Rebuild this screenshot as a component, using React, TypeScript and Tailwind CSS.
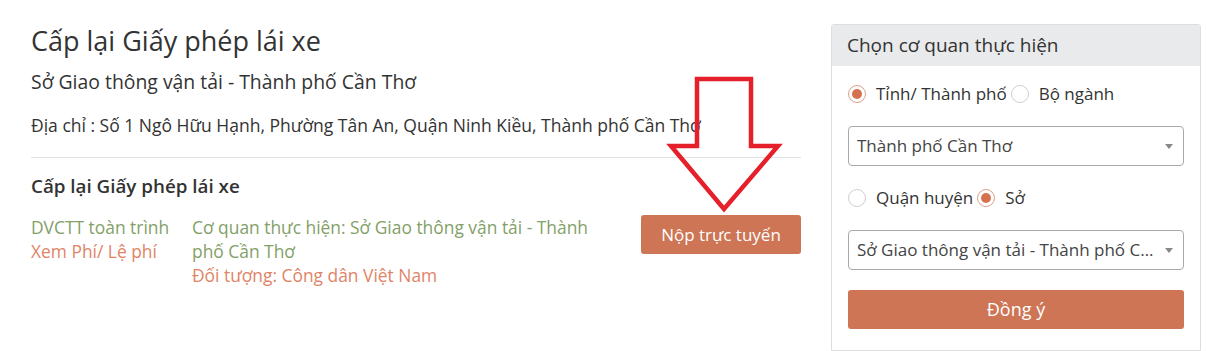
function Radio({ checked, label }: { checked: boolean; label: string }) {
  return (
    <label className="flex items-center">
      <span
        className={
          checked
            ? "flex h-[18px] w-[18px] items-center justify-center rounded-full border border-[#d9a08a] bg-white"
            : "flex h-[18px] w-[18px] items-center justify-center rounded-full border border-[#cfcfcf] bg-white"
        }
      >
        {checked && <span className="h-[10px] w-[10px] rounded-full bg-[#d6714f]" />}
      </span>
      <span className="ml-[10px] mr-[4px]">{label}</span>
    </label>
  );
}

function FakeSelect({ value }: { value: string }) {
  return (
    <div className="flex h-[40px] items-center rounded-[4px] border border-[#aaaaaa] bg-white pl-[8px] pr-[10px]">
      <span className="flex-1 truncate text-[17px] text-[#444]">{value}</span>
      <span className="ml-2 h-0 w-0 border-x-[4px] border-t-[5px] border-x-transparent border-t-[#888]" />
    </div>
  );
}

export default function App() {
  return (
    <div className="flex h-[351px] w-[1206px] overflow-hidden bg-white font-['Open_Sans',sans-serif] text-[#333]">
      <div className="relative ml-[31px] w-[770px]">
        <h1 className="mt-[25px] text-[27px] leading-[32px] text-[#333]">Cấp lại Giấy phép lái xe</h1>
        <p className="mt-[12px] text-[19.4px] leading-[26px]">Sở Giao thông vận tải - Thành phố Cần Thơ</p>
        <p className="mt-[18px] text-[17.5px] leading-[24px]">
          Địa chỉ : Số 1 Ngô Hữu Hạnh, Phường Tân An, Quận Ninh Kiều, Thành phố Cần Thơ
        </p>
        <div className="mt-[20px] border-t border-[#e2e2e2]" />
        <h2 className="mt-[16px] text-[18.8px] font-semibold leading-[24px]">Cấp lại Giấy phép lái xe</h2>
        <div className="mt-[17px] flex text-[17.4px] leading-[24px]">
          <div className="w-[161px]">
            <div className="text-[#84a068]">DVCTT toàn trình</div>
            <div className="text-[#df8467]">Xem Phí/ Lệ phí</div>
          </div>
          <div className="w-[400px]">
            <div className="text-[#84a068]">Cơ quan thực hiện: Sở Giao thông vận tải - Thành phố Cần Thơ</div>
            <div className="text-[#df8467]">Đối tượng: Công dân Việt Nam</div>
          </div>
          <button className="ml-auto h-[39px] w-[160px] rounded-[3px] bg-[#cd7555] text-[17px] text-white">
            Nộp trực tuyến
          </button>
        </div>
        <svg className="absolute left-[608px] top-[76px]" width="145" height="140" viewBox="0 0 145 140">
          <polygon
            points="58,3 112,3 112,70 139,70 85,133 32,70 58,70"
            fill="none"
            stroke="#e5202a"
            strokeWidth="4.5"
          />
        </svg>
      </div>
      <div className="ml-[30px] mt-[24px] w-[370px] rounded-t-[3px] border border-[#dedede]">
        <div className="flex h-[41px] items-center bg-[#e9eaeb] px-[15px] text-[19px]">Chọn cơ quan thực hiện</div>
        <div className="space-y-5 px-[16px] pt-[16px] text-[17px]">
          <div className="flex h-[24px] items-center">
            <Radio checked label="Tỉnh/ Thành phố" />
            <Radio checked={false} label="Bộ ngành" />
          </div>
          <FakeSelect value="Thành phố Cần Thơ" />
          <div className="flex h-[24px] items-center">
            <Radio checked={false} label="Quận huyện" />
            <Radio checked label="Sở" />
          </div>
          <FakeSelect value="Sở Giao thông vận tải - Thành phố Cần Thơ" />
          <button className="h-[39px] w-full rounded-[3px] bg-[#cd7555] text-[18px] text-white">Đồng ý</button>
        </div>
      </div>
    </div>
  );
}
